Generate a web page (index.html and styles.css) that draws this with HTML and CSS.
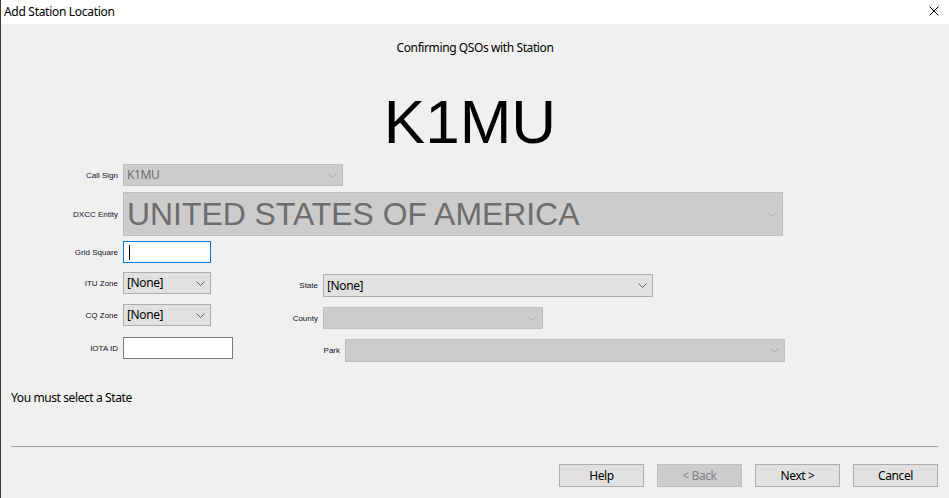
FILE: index.html
```html
<!DOCTYPE html>
<html lang="en">
<head>
<meta charset="utf-8">
<title>Add Station Location</title>
<link rel="stylesheet" href="styles.css">
</head>
<body>
<div class="window">
  <header class="titlebar">
    <span class="title">Add Station Location</span>
    <svg class="close" width="10" height="10" viewBox="0 0 10 10" aria-label="Close">
      <path d="M0.5 0.5 L9.5 9.5 M9.5 0.5 L0.5 9.5" fill="none" stroke="#000" stroke-width="1"/>
    </svg>
  </header>
  <main class="content">
    <p class="subtitle">Confirming QSOs with Station</p>
    <h1 class="callsign">K1MU</h1>

    <div class="row row-call">
      <label class="lbl lbl-left">Call Sign</label>
      <div class="combo disabled w-call">
        <span class="val">K1MU</span>
        <svg class="chev" width="9" height="5" viewBox="0 0 9 5"><polyline points="0.5,0.5 4.5,4.5 8.5,0.5"/></svg>
      </div>
    </div>

    <div class="row row-dxcc">
      <label class="lbl lbl-left">DXCC Entity</label>
      <div class="combo disabled w-dxcc">
        <span class="val big">UNITED STATES OF AMERICA</span>
        <svg class="chev" width="9" height="5" viewBox="0 0 9 5"><polyline points="0.5,0.5 4.5,4.5 8.5,0.5"/></svg>
      </div>
    </div>

    <div class="row row-grid">
      <label class="lbl lbl-left">Grid Square</label>
      <div class="textbox focused w-grid"><span class="caret"></span></div>
    </div>

    <div class="lower">
      <div class="col-left">
        <div class="row row-itu">
          <label class="lbl lbl-left">ITU Zone</label>
          <div class="combo w-zone">
            <span class="val">[None]</span>
            <svg class="chev" width="9" height="5" viewBox="0 0 9 5"><polyline points="0.5,0.5 4.5,4.5 8.5,0.5"/></svg>
          </div>
        </div>
        <div class="row row-cq">
          <label class="lbl lbl-left">CQ Zone</label>
          <div class="combo w-zone">
            <span class="val">[None]</span>
            <svg class="chev" width="9" height="5" viewBox="0 0 9 5"><polyline points="0.5,0.5 4.5,4.5 8.5,0.5"/></svg>
          </div>
        </div>
        <div class="row row-iota">
          <label class="lbl lbl-left">IOTA ID</label>
          <div class="textbox w-iota"></div>
        </div>
      </div>

      <div class="col-right">
        <div class="row row-state">
          <label class="lbl lbl-state">State</label>
          <div class="combo w-state tall">
            <span class="val">[None]</span>
            <svg class="chev" width="9" height="5" viewBox="0 0 9 5"><polyline points="0.5,0.5 4.5,4.5 8.5,0.5"/></svg>
          </div>
        </div>
        <div class="row row-county">
          <label class="lbl lbl-state">County</label>
          <div class="combo disabled w-county">
            <span class="val"></span>
            <svg class="chev" width="9" height="5" viewBox="0 0 9 5"><polyline points="0.5,0.5 4.5,4.5 8.5,0.5"/></svg>
          </div>
        </div>
        <div class="row row-park">
          <label class="lbl lbl-park">Park</label>
          <div class="combo disabled w-park tall">
            <span class="val"></span>
            <svg class="chev" width="9" height="5" viewBox="0 0 9 5"><polyline points="0.5,0.5 4.5,4.5 8.5,0.5"/></svg>
          </div>
        </div>
      </div>
    </div>

    <p class="message">You must select a State</p>
    <div class="separator"></div>

    <div class="buttons">
      <button class="btn">Help</button>
      <button class="btn" disabled>&lt; Back</button>
      <button class="btn">Next &gt;</button>
      <button class="btn">Cancel</button>
    </div>
  </main>
</div>
</body>
</html>
```

FILE: styles.css
```css
html, body {
  margin: 0;
  padding: 0;
  background: #f0f0f0;
}

.window {
  width: 949px;
  height: 498px;
  box-sizing: border-box;
  border-left: 1px solid #3b3b3b;
  background: #f0f0f0;
  font-family: "Noto Sans", "Open Sans", sans-serif;
  font-size: 12px;
  letter-spacing: -0.4px;
  color: #000;
  overflow: hidden;
}

/* title bar */
.titlebar {
  height: 24px;
  background: #ffffff;
  display: flex;
  justify-content: space-between;
  align-items: flex-start;
}

.title {
  margin-left: 3px;
  line-height: 23px;
  letter-spacing: -0.3px;
}

.close {
  margin: 6px 10px 0 0;
  display: block;
}

/* header texts */
.subtitle {
  margin: 16px 0 0;
  line-height: 16px;
  text-align: center;
}

.callsign {
  margin: 31px 0 0;
  padding-right: 10px;
  text-align: center;
  font-family: "Liberation Sans", Arial, sans-serif;
  font-weight: 400;
  font-size: 62px;
  line-height: 70px;
  letter-spacing: 0;
}

/* form rows */
.row {
  display: flex;
  align-items: center;
}

.lbl {
  flex: none;
  text-align: right;
  margin-right: 5px;
  font-family: "Liberation Sans", Arial, sans-serif;
  font-size: 8px;
  letter-spacing: 0;
  color: #10102a;
}

.lbl-left { width: 117px; }
.lbl-state { width: 85px; }
.lbl-park { width: 107px; }

.row-call { margin-top: 7px; }
.row-dxcc { margin-top: 6px; }
.row-grid { margin-top: 5px; }

.lower {
  display: flex;
  margin-top: 9px;
}

.col-left {
  width: 232px;
  flex: none;
}

.col-right {
  padding-top: 2px;
}

.row-cq { margin-top: 10px; }
.row-iota { margin-top: 11px; }
.row-county { margin-top: 10px; }
.row-park { margin-top: 10px; }

/* combo boxes */
.combo {
  box-sizing: border-box;
  height: 22px;
  display: flex;
  align-items: center;
  justify-content: space-between;
  padding: 0 5px 0 3px;
  background: #e1e1e1;
  border: 1px solid #adadad;
  color: #000;
  flex: none;
}

.combo.tall { height: 23px; }

.combo .chev {
  display: block;
  fill: none;
  stroke: #606060;
  stroke-width: 1;
}

.combo.disabled {
  background: #cccccc;
  border-color: #bfbfbf;
  color: #6d6d6d;
}

.combo.disabled .chev {
  stroke: #a9a9a9;
}

.val {
  white-space: nowrap;
  line-height: 16px;
}

.val.big {
  font-family: "Liberation Sans", Arial, sans-serif;
  font-size: 31.9px;
  line-height: 36px;
  letter-spacing: 0;
}

.w-call { width: 220px; }
.w-dxcc { width: 660px; height: 44px; }
.w-zone { width: 88px; }
.w-state { width: 330px; }
.w-county { width: 220px; }
.w-park { width: 440px; }

/* text boxes */
.textbox {
  box-sizing: border-box;
  height: 22px;
  background: #ffffff;
  border: 1px solid #7a7a7a;
  flex: none;
  display: flex;
  align-items: center;
}

.textbox.focused {
  border-color: #0078d7;
}

.w-grid { width: 88px; }
.w-iota { width: 110px; }

.caret {
  display: block;
  width: 1px;
  height: 15px;
  margin-left: 5px;
  background: #000;
}

/* message and footer */
.message {
  margin: 28px 0 0 10px;
  line-height: 16px;
}

.separator {
  margin: 40px 11px 0 10px;
  border-top: 1px solid #a0a0a0;
}

.buttons {
  display: flex;
  justify-content: flex-end;
  gap: 13px;
  margin-top: 17px;
  padding-right: 11px;
}

.btn {
  box-sizing: border-box;
  width: 85px;
  height: 23px;
  padding: 0;
  margin: 0;
  background: #e1e1e1;
  border: 1px solid #adadad;
  border-radius: 0;
  font-family: "Noto Sans", "Open Sans", sans-serif;
  font-size: 12px;
  letter-spacing: -0.4px;
  color: #000;
}

.btn:disabled {
  background: #cccccc;
  border-color: #bfbfbf;
  color: #838383;
}
```
